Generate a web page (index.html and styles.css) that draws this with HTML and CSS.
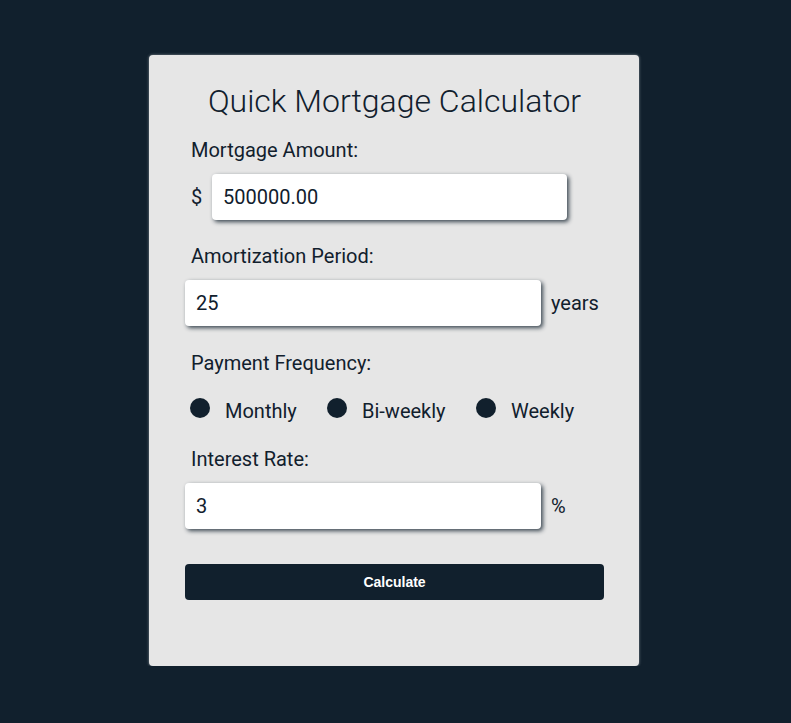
FILE: index.html
```html
<!DOCTYPE html>
<html lang="en">
<head>
<meta charset="utf-8">
<title>Quick Mortgage Calculator</title>
<link rel="stylesheet" href="styles.css">
</head>
<body>
<main class="card">
  <h1 class="title">Quick Mortgage Calculator</h1>

  <section class="field field-first">
    <label class="label" for="amount">Mortgage Amount:</label>
    <div class="row">
      <span class="prefix">$</span>
      <input class="input input-amount" id="amount" type="text" value="500000.00">
    </div>
  </section>

  <section class="field">
    <label class="label" for="period">Amortization Period:</label>
    <div class="row">
      <input class="input" id="period" type="text" value="25">
      <span class="suffix">years</span>
    </div>
  </section>

  <section class="field field-freq">
    <span class="label label-freq">Payment Frequency:</span>
    <div class="radios">
      <label class="radio"><span class="dot"></span><span class="radio-text">Monthly</span></label>
      <label class="radio"><span class="dot"></span><span class="radio-text">Bi-weekly</span></label>
      <label class="radio"><span class="dot"></span><span class="radio-text">Weekly</span></label>
    </div>
  </section>

  <section class="field">
    <label class="label" for="rate">Interest Rate:</label>
    <div class="row">
      <input class="input" id="rate" type="text" value="3">
      <span class="suffix">%</span>
    </div>
  </section>

  <button class="btn" type="button">Calculate</button>
</main>
</body>
</html>
```

FILE: styles.css
```css
* { box-sizing: border-box; }

html, body {
  margin: 0;
  padding: 0;
  background: #11202d;
}

body {
  font-family: Roboto, "Liberation Sans", Arial, sans-serif;
  color: #11202d;
  padding: 55px 3px 0 0;
}

.card {
  width: 490px;
  height: 611px;
  margin: 0 auto;
  background: #e6e6e6;
  border-radius: 4px;
  box-shadow: 0 0 3px rgba(200, 205, 210, 0.6);
  padding: 0 35px 0 36px;
  display: flex;
  flex-direction: column;
}

.title {
  margin: 27px 0 0;
  font-weight: 300;
  font-size: 32px;
  line-height: 38px;
  text-align: center;
  color: #11202d;
}

.field {
  display: flex;
  flex-direction: column;
  margin-top: 25px;
}

.field-first {
  margin-top: 19px;
}

.field-freq {
  margin-top: 26px;
}

.label {
  display: block;
  font-size: 20px;
  line-height: 23px;
  padding-left: 6px;
  margin-bottom: 12px;
}

.label-freq {
  margin-bottom: 23px;
}

.row {
  display: flex;
  align-items: center;
  gap: 10px;
}

.prefix {
  font-size: 20px;
  padding-left: 6px;
  width: 27px;
  margin-right: -10px;
}

.suffix {
  font-size: 20px;
}

.input {
  width: 356px;
  height: 46px;
  border: none;
  border-radius: 4px;
  background: #fff;
  box-shadow: 2px 2px 4px rgba(17, 32, 45, 0.8);
  padding: 0 10px 0 11px;
  font-family: Roboto, "Liberation Sans", Arial, sans-serif;
  font-size: 20px;
  color: #11202d;
  outline: none;
}

.input-amount {
  width: 355px;
}

.radios {
  display: flex;
  align-items: flex-start;
  padding-left: 5px;
  height: 25px;
}

.radio {
  display: flex;
  align-items: flex-start;
  font-size: 20px;
}

.dot {
  width: 20px;
  height: 20px;
  border-radius: 50%;
  background: #11202d;
  flex: none;
}

.radio-text {
  margin-left: 15px;
  margin-top: 2px;
  line-height: 23px;
}

.radio:nth-child(1) { width: 137px; }
.radio:nth-child(2) { width: 149px; }

.btn {
  margin-top: 35px;
  width: 419px;
  height: 36px;
  border: none;
  border-radius: 4px;
  background: #11202d;
  color: #fff;
  font-family: "Liberation Sans", Arial, sans-serif;
  font-weight: bold;
  font-size: 14px;
  cursor: pointer;
}
```
